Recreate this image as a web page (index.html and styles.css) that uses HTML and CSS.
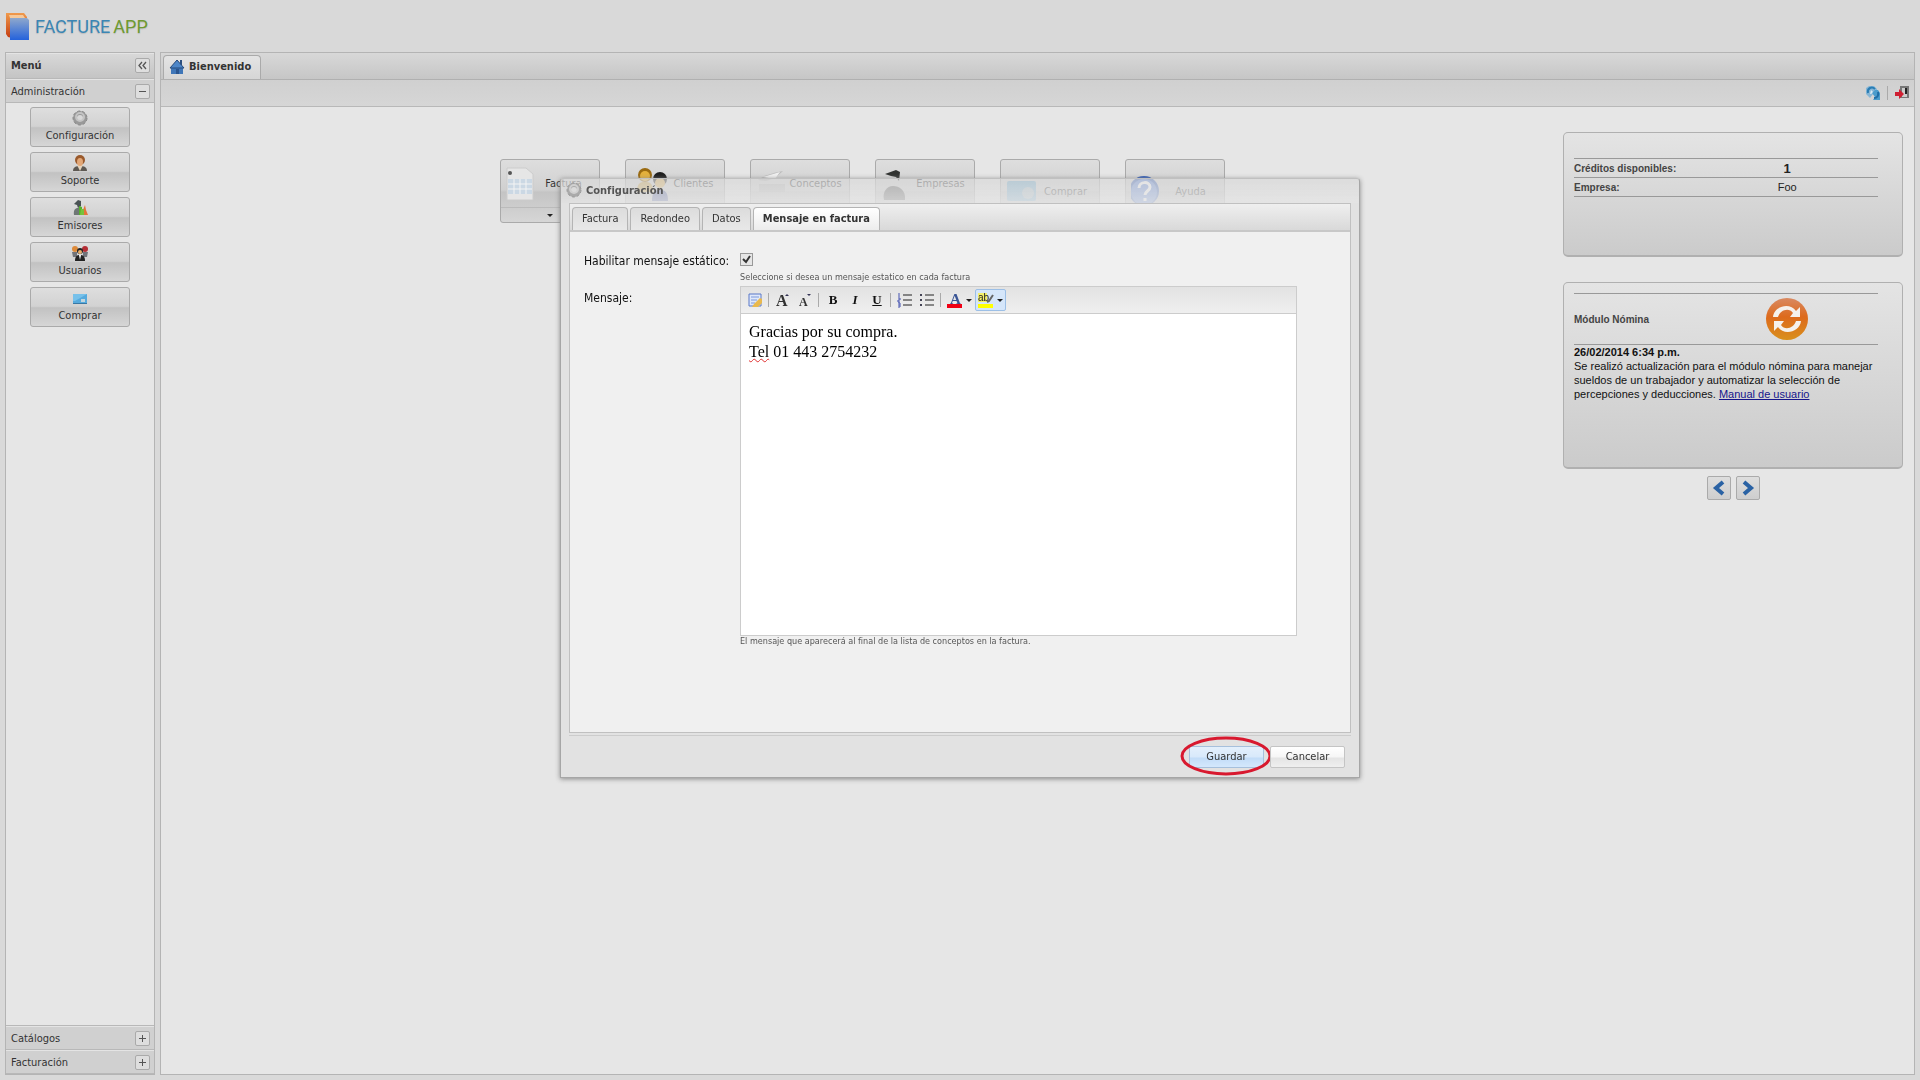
FILE: index.html
```html
<!DOCTYPE html>
<html lang="es">
<head>
  <meta charset="UTF-8">
  <meta name="viewport" content="width=device-width, initial-scale=1.0">
  <title>Facture App</title>
  <link rel="stylesheet" href="styles.css">
</head>
<body>

<header class="logo">
  <svg width="24" height="29" viewBox="0 0 24 29">
    <defs>
      <linearGradient id="blue" x1="0" y1="0" x2="0" y2="1"><stop offset="0" stop-color="#8fa8cc"/><stop offset="1" stop-color="#2462dc"/></linearGradient>
      <linearGradient id="red" x1="0" y1="0" x2="0" y2="1"><stop offset="0" stop-color="#f09a4c"/><stop offset="1" stop-color="#c43c10"/></linearGradient>
    </defs>
    <path d="M0 1h18l3 4v5H6v16l-4-1-2-3z" fill="url(#red)"/>
    <path d="M3 3h14l2 3H4z" fill="#f6c99a"/>
    <path d="M4 6h17l2 2v20H4z" fill="url(#blue)"/>
  </svg>
  <h1 class="logo-text"><span class="logo-blue">FACTURE</span> <span class="logo-green">APP</span></h1>
</header>

<div class="viewport">
  <nav class="menu">
    <div class="menu-title">Menú
      <button class="tool" aria-label="Contraer"><svg width="9" height="9" viewBox="0 0 9 9"><path d="M4 1L1 4.500l3 3.500M8 1L5 4.500l3 3.500" fill="none" stroke="#555" stroke-width="1.300"/></svg></button>
    </div>
    <div class="menu-head">Administración
      <button class="tool" aria-label="Cerrar"><svg width="9" height="9" viewBox="0 0 9 9"><path d="M1 4.500h7" stroke="#555"/></svg></button>
    </div>
    <div class="menu-items">
      <button class="menu-btn">
        <svg width="16" height="16" viewBox="0 0 16 16"><circle cx="8" cy="8" r="5" fill="none" stroke="#999" stroke-width="4"/><circle cx="8" cy="8" r="7" fill="none" stroke="#888" stroke-dasharray="3 2"/><circle cx="8" cy="7" r="4" fill="none" stroke="#c4c4c4" stroke-width="2"/></svg>
        Configuración</button>
      <button class="menu-btn">
        <svg width="16" height="16" viewBox="0 0 16 16"><path d="M1 16c0-4 3-5 7-5s7 1 7 5z" fill="#5d5852"/><path d="M5 10h6l-3 6z" fill="#e5d3bc"/><circle cx="8" cy="5" r="5" fill="#9a5a2c"/><ellipse cx="8" cy="7" rx="3" ry="4" fill="#e3a878"/></svg>
        Soporte</button>
      <button class="menu-btn">
        <svg width="16" height="16" viewBox="0 0 16 16"><path d="M2 15c-1-6 2-7 4-7s5 1 5 7z" fill="#6f7775"/><path d="M2 4l4-4 3 1v5l-3 2-1-3z" fill="#4a5354"/><path d="M7 6l3 1v8H7z" fill="#55b32b"/><path d="M11 10l2-5 1 5 2 5h-5z" fill="#e4743a"/><path d="M9 9h3v6H8z" fill="#77c23c"/></svg>
        Emisores</button>
      <button class="menu-btn">
        <svg width="16" height="16" viewBox="0 0 16 16"><circle cx="3" cy="4" r="3" fill="#dc8a3a"/><circle cx="13" cy="4" r="3" fill="#b42d34"/><path d="M0 7h5v5H1zM11 7h5l-1 5h-4z" fill="#71747a"/><circle cx="8" cy="6" r="3" fill="#222"/><circle cx="8" cy="7" r="2" fill="#e8b070"/><path d="M3 16c0-5 2-6 5-6s5 1 5 6z" fill="#222"/><path d="M7 10h2l-1 5z" fill="#fff"/></svg>
        Usuarios</button>
      <button class="menu-btn">
        <svg width="16" height="16" viewBox="0 0 16 16"><rect x="1" y="4" width="14" height="10" fill="#56aadd"/><path d="M1 4h14L3 11H1z" fill="#77c1ea"/><path d="M9 9h4v3H9z" fill="#c1d5dd"/><path d="M1 13h14v1H1z" fill="#3978a4"/></svg>
        Comprar</button>
    </div>
    <div class="menu-head">Catálogos
      <button class="tool" aria-label="Abrir catálogos"><svg width="9" height="9" viewBox="0 0 9 9"><path d="M1 4.500h7M4.500 1v7" stroke="#555"/></svg></button>
    </div>
    <div class="menu-head">Facturación
      <button class="tool" aria-label="Abrir facturación"><svg width="9" height="9" viewBox="0 0 9 9"><path d="M1 4.500h7M4.500 1v7" stroke="#555"/></svg></button>
    </div>
  </nav>

  <main class="center">
    <div class="tabbar">
      <button class="tab-home">
        <svg width="16" height="16" viewBox="0 0 16 16"><path d="M2 8h12v7H2z" fill="#3f76b8"/><path d="M11 1h2v5h-2z" fill="#2c4f80"/><path d="M8 1l7 8H1z" fill="#4d86c8" stroke="#264a7c"/><path d="M7 10h3v5H7z" fill="#2a5590"/></svg>
        Bienvenido</button>
    </div>
    <div class="toolbar">
      <button class="icon-btn" aria-label="Actualizar"><svg width="16" height="16" viewBox="0 0 16 16"><path d="M1 3l3-2h5l3 3v4l-4 1-3 4-4-4z" fill="#86b6d6"/><path d="M3 8c-1-5 4-7 7-4" fill="none" stroke="#2a7db4" stroke-width="2"/><path d="M6 5l3 3-4 1z" fill="#dcebf4"/><path d="M7 8l3-3h3l2 3v7H8l2-3z" fill="#4b9ccc"/><path d="M13 7c1 4-1 6-4 6" fill="none" stroke="#1f6ea6" stroke-width="2"/></svg></button>
      <span class="sep"></span>
      <button class="icon-btn" aria-label="Salir"><svg width="16" height="16" viewBox="0 0 16 16"><path d="M6 1h9v12H6z" fill="#777"/><path d="M8 3h5v9H8z" fill="#ccc"/><path d="M11 3h2v6h-2z" fill="#222"/><path d="M10 9L5 14v-3H1V7h4V4z" fill="#cf1f32"/></svg></button>
    </div>

    <div class="content">
      <section class="launcher">
        <button class="launch">
          <span class="launch-main"><svg width="28" height="34" viewBox="0 0 28 34"><path d="M1 1h19l7 6v26H1z" fill="#e6e6e6" stroke="#ccc"/><path d="M2 12h24v15H2z" fill="#cbd8e4"/><path d="M2 17h24M2 22h24M8 12v15M14 12v15M20 12v15" stroke="#f4f4f4"/><circle cx="4" cy="6" r="2" fill="#555"/></svg><span class="launch-label">Factura</span></span>
          <span class="launch-arrow"></span>
        </button>
        <button class="launch">
          <span class="launch-main"><svg width="38" height="36" viewBox="0 0 38 36"><circle cx="14" cy="9" r="7" fill="#9a6a10"/><circle cx="14" cy="10" r="5" fill="#e4b13c"/><path d="M6 26c0-9 3-10 8-10s8 1 8 10z" fill="#c8a040"/><circle cx="29" cy="13" r="7" fill="#1d1d1d"/><circle cx="29" cy="17" r="5" fill="#dcae52"/><path d="M21 35c0-9 3-11 8-11s8 2 8 11z" fill="#3b4a90"/></svg><span class="launch-label">Clientes</span></span>
          <span class="launch-arrow"></span>
        </button>
        <button class="launch">
          <span class="launch-main"><svg width="32" height="32" viewBox="0 0 32 32"><path d="M2 12c7-5 15-7 25-9l-8 7-9 3z" fill="#bbb"/><path d="M7 9l17-5-5 7z" fill="#f2f2f2"/><path d="M3 16h26v8H3z" fill="#bbb"/></svg><span class="launch-label">Conceptos</span></span>
          <span class="launch-arrow"></span>
        </button>
        <button class="launch">
          <span class="launch-main"><svg width="32" height="32" viewBox="0 0 32 32"><path d="M4 6l11-4 4 2-1 9-3-4-5-1z" fill="#303230"/><path d="M3 32c-2-8 3-14 9-14s13 4 12 14z" fill="#555"/></svg><span class="launch-label">Empresas</span></span>
          <span class="launch-arrow"></span>
        </button>
        <button class="launch">
          <span class="launch-main"><svg width="32" height="32" viewBox="0 0 32 32"><rect x="1" y="6" width="29" height="20" rx="2" fill="#70aacc"/><circle cx="22" cy="18" r="6" fill="#a6bcc8"/></svg><span class="launch-label">Comprar</span></span>
        </button>
        <button class="launch">
          <span class="launch-main"><svg width="32" height="32" viewBox="0 0 32 32"><circle cx="13" cy="16" r="15" fill="#3760b8"/><circle cx="13" cy="17" r="13" fill="#5c86dc"/><path d="M8 13c0-7 11-7 11-1 0 4-5 4-5 8M14 23v3" fill="none" stroke="#fff" stroke-width="3"/></svg><span class="launch-label">Ayuda</span></span>
        </button>
      </section>

      <aside class="side">
        <div class="card card-info">
          <table class="info">
            <tr><th>Créditos disponibles:</th><td class="credits">1</td></tr>
            <tr><th>Empresa:</th><td>Foo</td></tr>
          </table>
        </div>
        <div class="card card-news">
          <table class="info">
            <tr><th>Módulo Nómina</th><td class="news-icon"><svg width="44" height="44" viewBox="0 0 44 44">
              <defs><linearGradient id="orange" x1="0" y1="0" x2="0" y2="1"><stop offset="0" stop-color="#d98a62"/><stop offset="0.450" stop-color="#dd6a1c"/><stop offset="1" stop-color="#d9901c"/></linearGradient></defs>
              <circle cx="22" cy="22" r="21" fill="url(#orange)"/>
              <path d="M8 20c1-11 17-15 23-6l4-4v10H25l3-4c-4-6-13-3-15 4z" fill="#f5f1ec"/>
              <path d="M36 24c-1 11-17 15-23 6l-4 4V24h10l-3 4c4 6 13 3 15-4z" fill="#f5f1ec"/></svg></td></tr>
          </table>
          <p class="news"><b>26/02/2014 6:34 p.m.</b><br>Se realizó actualización para el módulo nómina para manejar sueldos de un trabajador y automatizar la selección de percepciones y deducciones. <a href="#">Manual de usuario</a></p>
        </div>
        <div class="pager">
          <button class="page-btn" aria-label="Anterior"><svg width="16" height="16" viewBox="0 0 16 16"><path d="M12 2L5 8l7 6" fill="none" stroke="#2a62a4" stroke-width="4"/></svg></button>
          <button class="page-btn" aria-label="Siguiente"><svg width="16" height="16" viewBox="0 0 16 16"><path d="M4 2l7 6-7 6" fill="none" stroke="#2a62a4" stroke-width="4"/></svg></button>
        </div>
      </aside>
    </div>
  </main>
</div>

<div class="window" role="dialog" aria-labelledby="window-title">
  <div class="window-head">
    <svg width="16" height="16" viewBox="0 0 16 16"><circle cx="8" cy="8" r="5" fill="none" stroke="#aaa" stroke-width="4"/><circle cx="8" cy="8" r="7" fill="none" stroke="#999" stroke-dasharray="3 2"/><circle cx="8" cy="7" r="4" fill="none" stroke="#d0d0d0" stroke-width="2"/></svg>
    <span id="window-title">Configuración</span>
  </div>
  <div class="window-body">
    <div class="tabs">
      <button class="tab">Factura</button>
      <button class="tab">Redondeo</button>
      <button class="tab">Datos</button>
      <button class="tab active">Mensaje en factura</button>
    </div>
    <form class="form" id="config">
      <label class="label" for="enable">Habilitar mensaje estático:</label>
      <div class="field">
        <input type="checkbox" class="check" id="enable" checked>
        <div class="help">Seleccione si desea un mensaje estatico en cada factura</div>
      </div>
      <span class="label label-message" id="message-label">Mensaje:</span>
      <div class="field">
        <div class="editor">
          <div class="editor-bar">
            <button type="button" class="edit-btn" aria-label="Estilo"><svg width="16" height="16" viewBox="0 0 16 16"><path d="M2 2h12v12H2z" fill="#dfe8fa" stroke="#5a79c8"/><path d="M4 5h8M4 8h6M4 11h4" stroke="#7c99dc"/><path d="M13 6l2 1v4l-4 4H5l2-3z" fill="#e9b94e"/></svg></button>
            <span class="sep"></span>
            <button type="button" class="edit-btn" aria-label="Agrandar texto"><svg width="18" height="16" viewBox="0 0 18 16"><text class="glyph" x="2" y="14" font-size="16">A</text><path d="M11 4l2-2 2 2z" fill="#335"/></svg></button>
            <button type="button" class="edit-btn" aria-label="Reducir texto"><svg width="18" height="16" viewBox="0 0 18 16"><text class="glyph" x="3" y="14" font-size="12">A</text><path d="M11 2h4l-2 2z" fill="#335"/></svg></button>
            <span class="sep"></span>
            <button type="button" class="edit-btn bold">B</button>
            <button type="button" class="edit-btn italic">I</button>
            <button type="button" class="edit-btn underline">U</button>
            <span class="sep"></span>
            <button type="button" class="edit-btn" aria-label="Lista numerada"><svg width="16" height="16" viewBox="0 0 16 16"><path d="M6 3h9M6 8h9M6 13h9" stroke="#222"/><path d="M2 1v4M1 6h2v2H1v2h2M1 11h2v4H1M1 13h2" fill="none" stroke="#4453b0"/></svg></button>
            <button type="button" class="edit-btn" aria-label="Lista"><svg width="16" height="16" viewBox="0 0 16 16"><path d="M6 3h9M6 8h9M6 13h9" stroke="#222"/><path d="M1 2h2v2H1zM1 7h2v2H1zM1 12h2v2H1z" fill="#445"/></svg></button>
            <span class="sep"></span>
            <button type="button" class="edit-btn split" aria-label="Color de texto"><svg width="16" height="16" viewBox="0 0 16 16"><text class="glyph glyph-blue" x="3" y="12" font-size="15">A</text><path d="M0 12h15v4H0z" fill="#f00014"/></svg><i class="caret"></i></button>
            <button type="button" class="edit-btn split pressed" aria-label="Color de fondo"><svg width="16" height="16" viewBox="0 0 16 16"><path d="M0 1h9v9H0z" fill="#f4f06a"/><text class="glyph-ab" x="0" y="9" font-size="10">ab</text><path d="M15 3l-4 6-2 1" fill="none" stroke="#666" stroke-width="2"/><path d="M0 12h15v4H0z" fill="#ff0"/></svg><i class="caret"></i></button>
          </div>
          <div class="editor-text" contenteditable="true" spellcheck="false" role="textbox" aria-multiline="true" aria-labelledby="message-label">Gracias por su compra.<br><span class="misspelled">Tel</span> 01 443 2754232</div>
        </div>
        <div class="help">El mensaje que aparecerá al final de la lista de conceptos en la factura.</div>
      </div>
    </form>
  </div>
  <div class="window-foot">
    <button class="btn btn-save" form="config">Guardar<svg class="ring" width="92" height="40" viewBox="0 0 92 40"><ellipse cx="46" cy="20" rx="44" ry="18" fill="none" stroke="#d8192f" stroke-width="3"/></svg></button>
    <button class="btn">Cancelar</button>
  </div>
</div>

</body>
</html>
```
FILE: styles.css
```css
* {
  box-sizing: border-box;
}
body {
  margin: 0;
  height: 100vh;
  display: flex;
  flex-direction: column;
  background-color: #d9d9d9;
  color: #333;
  font-family: "DejaVu Sans Condensed", "Liberation Sans", sans-serif;
  font-size: 11px;
}
button {
  font: inherit;
  color: inherit;
  padding: 0;
  margin: 0;
}
svg {
  display: block;
  flex: none;
}
.logo {
  height: 52px;
  padding: 0 6px;
  display: flex;
  align-items: center;
  gap: 5px;
  flex: none;
}
.logo-text {
  margin: 0;
  display: flex;
  gap: 3px;
  font-family: Roboto, sans-serif;
  font-size: 18px;
  font-weight: normal;
  text-shadow: 0 1px 1px #bbb;
}
.logo-blue {
  color: #3b86b4;
}
.logo-green {
  color: #6f9a30;
}
.viewport {
  flex: 1;
  display: flex;
  gap: 5px;
  padding: 0 5px 5px;
  min-height: 0;
}

/* left menu */
.menu {
  width: 150px;
  display: flex;
  flex-direction: column;
  border: 1px solid #b4b4b4;
  background-color: #e6e6e6;
}
.menu-title,
.menu-head {
  height: 24px;
  padding: 0 4px 0 5px;
  display: flex;
  align-items: center;
  justify-content: space-between;
  border-bottom: 1px solid #b8b8b8;
  border-top: 1px solid #e4e4e4;
  background-color: #d0d0d0;
  flex: none;
}
.menu-title {
  height: 26px;
  padding-bottom: 1px;
  font-weight: bold;
  background: linear-gradient(#d8d8d8, #c4c4c4);
}
.tool {
  width: 15px;
  height: 15px;
  display: flex;
  align-items: center;
  justify-content: center;
  border: 1px solid #aaa;
  border-radius: 2px;
  background-color: #dedede;
}
.menu-items {
  flex: 1;
  padding: 4px 0;
  display: flex;
  flex-direction: column;
  align-items: center;
  gap: 5px;
  border-bottom: 1px solid #b8b8b8;
}
.menu-btn {
  width: 100px;
  height: 40px;
  padding-bottom: 2px;
  display: flex;
  flex-direction: column;
  align-items: center;
  justify-content: center;
  gap: 3px;
  border: 1px solid #aaa;
  border-radius: 3px;
  background: linear-gradient(#dedede, #d2d2d2 48%, #c2c2c2 52%, #d6d6d6);
}

/* center panel */
.center {
  flex: 1;
  display: flex;
  flex-direction: column;
  border: 1px solid #b4b4b4;
  background-color: #e6e6e6;
}
.tabbar {
  height: 27px;
  padding: 2px 2px 0;
  display: flex;
  border-bottom: 1px solid #b0b0b0;
  background: linear-gradient(#d8d8d8, #c6c6c6);
}
.tab-home {
  padding: 0 9px 2px 5px;
  display: flex;
  align-items: center;
  gap: 4px;
  border: 1px solid #aaa;
  border-bottom: 0;
  border-radius: 4px 4px 0 0;
  background: linear-gradient(#e4e4e4, #d6d6d6);
  font-weight: bold;
}
.toolbar {
  height: 27px;
  padding: 0 4px;
  display: flex;
  align-items: center;
  justify-content: flex-end;
  gap: 5px;
  border-bottom: 1px solid #b8b8b8;
  background: linear-gradient(#d0d0d0, #d6d6d6);
}
.icon-btn {
  border: 0;
  background: none;
}
.sep {
  width: 1px;
  height: 14px;
  margin: 0 1px;
  background-color: #aaa;
}
.content {
  flex: 1;
  display: flex;
  padding: 25px 11px 0 0;
}
.launcher {
  flex: 1;
  padding-top: 27px;
  display: flex;
  justify-content: center;
  align-items: flex-start;
  gap: 25px;
}
.launch {
  width: 100px;
  height: 64px;
  display: flex;
  flex-direction: column;
  border: 1px solid #aaa;
  border-radius: 3px;
  background: linear-gradient(#dedede, #d0d0d0 48%, #c4c4c4 52%, #d6d6d6);
}
.launch-main {
  flex: 1;
  width: 100%;
  padding: 0 5px;
  display: flex;
  align-items: center;
}
.launch-label {
  flex: 1;
}
.launch-arrow {
  width: 100%;
  height: 15px;
  display: flex;
  align-items: center;
  justify-content: center;
  border-top: 1px solid #bbb;
}
.launch-arrow::after,
.caret {
  content: "";
  border: 3px solid transparent;
  border-top-color: #222;
  border-bottom: 0;
}

/* right column */
.side {
  width: 340px;
  display: flex;
  flex-direction: column;
  font-family: "Liberation Sans", sans-serif;
}
.card {
  padding: 10px 24px 0 10px;
  border: 1px solid #b0b0b0;
  border-bottom-width: 2px;
  border-radius: 5px;
  background: linear-gradient(#e4e4e4, #cbcbcb);
}
.card-info {
  height: 125px;
  padding-top: 25px;
}
.card-news {
  height: 187px;
  margin-top: 25px;
}
.info {
  width: 100%;
  border-collapse: collapse;
}
.info th,
.info td {
  height: 19px;
  padding: 0;
  border-top: 1px solid #999;
  border-bottom: 1px solid #999;
}
.info th {
  width: 60%;
  text-align: left;
  font-size: 10px;
  color: #444;
}
.info td {
  width: 40%;
  padding-right: 60px;
  text-align: center;
  color: #222;
}
.info .credits {
  font-size: 13px;
  font-weight: bold;
}
.info .news-icon {
  height: 51px;
}
.news-icon svg {
  margin: 0 auto;
}
.news {
  margin: 0;
  line-height: 14px;
  color: #111;
}
.news a {
  color: #15158c;
}
.pager {
  padding-top: 7px;
  display: flex;
  justify-content: center;
  gap: 5px;
}
.page-btn {
  width: 24px;
  height: 24px;
  display: flex;
  align-items: center;
  justify-content: center;
  border: 1px solid #aaa;
  border-radius: 2px;
  background: linear-gradient(#dedede, #cecece);
}

/* dialog over the page */
.window {
  position: fixed;
  top: 178px;
  left: calc(50% - 400px);
  width: 800px;
  height: 600px;
  padding: 0 8px 0;
  display: flex;
  flex-direction: column;
  border: 1px solid #a6a6a6;
  border-top-color: #c0c0c0;
  border-radius: 3px 3px 0 0;
  background: linear-gradient(rgba(216, 216, 216, 0.7), rgba(228, 228, 228, 0.85) 24px, #e2e2e2 24px);
  box-shadow: 0 1px 5px #888;
}
.window-head {
  height: 24px;
  padding-bottom: 2px;
  display: flex;
  align-items: center;
  gap: 4px;
  margin-left: -3px;
  font-weight: bold;
  color: #555;
  flex: none;
}
.window-body {
  flex: 1;
  display: flex;
  flex-direction: column;
  border: 1px solid #c0c0c0;
  background-color: #f0f0f0;
}
.tabs {
  height: 28px;
  padding: 3px 2px 0;
  display: flex;
  gap: 2px;
  border-bottom: 2px solid #c8c8c8;
  background: linear-gradient(#efefef, #d9d9d9);
}
.tab {
  padding: 0 9px 1px;
  border: 1px solid #b4b4b4;
  border-bottom: 0;
  border-radius: 4px 4px 0 0;
  background: linear-gradient(#dcdcdc, #e8e8e8);
}
.tab.active {
  background: linear-gradient(#fff, #ececec);
  font-weight: bold;
}
.form {
  padding: 20px 53px 0 14px;
  display: grid;
  grid-template-columns: 156px 1fr;
  align-content: start;
  color: #111;
}
.label {
  font-size: 12px;
  line-height: 18px;
}
.label-message {
  padding-top: 3px;
}
.check {
  display: block;
  appearance: none;
  width: 13px;
  height: 13px;
  margin: 1px 0 6px;
  border: 1px solid #999;
  background-color: #e6e6e6;
}
.check:checked {
  background-image: url("data:image/svg+xml,%3Csvg xmlns='http://www.w3.org/2000/svg' viewBox='0 0 11 11'%3E%3Cpath d='M2 5l3 3 4-6' fill='none' stroke='%23333' stroke-width='2'/%3E%3C/svg%3E");
}
.help {
  font-size: 9px;
  line-height: 10px;
  color: #555;
}
.check + .help {
  margin-bottom: 4px;
}
.editor {
  border: 1px solid #ccc;
  background-color: #fff;
}
.editor-bar {
  height: 27px;
  padding: 0 3px;
  display: flex;
  align-items: center;
  border-bottom: 1px solid #ccc;
  background: linear-gradient(#e2e2e2, #efefef);
}
.editor-bar .sep {
  margin: 0 3px 0 2px;
}
.edit-btn {
  width: 22px;
  height: 22px;
  display: flex;
  align-items: center;
  justify-content: center;
  border: 1px solid transparent;
  background: none;
  font-family: "Liberation Serif", serif;
  font-size: 13px;
}
.edit-btn.split {
  width: 31px;
  gap: 3px;
  border-radius: 2px;
}
.edit-btn.pressed {
  border-color: #9cbfe6;
  background-color: #d5e6fa;
}
.bold {
  font-weight: bold;
}
.italic {
  font-style: italic;
  font-weight: bold;
}
.underline {
  font-weight: bold;
  text-decoration: underline;
}
.glyph {
  font-family: "Liberation Serif", serif;
  font-weight: bold;
  fill: #333;
}
.glyph-blue {
  fill: #3a5595;
}
.glyph-ab {
  font-family: "Liberation Sans", sans-serif;
  fill: #222;
}
.editor-text {
  height: 321px;
  padding: 8px;
  font-family: "Liberation Serif", serif;
  font-size: 16px;
  line-height: 20px;
  color: #000;
  outline: none;
}
.misspelled {
  text-decoration: underline wavy #e03030 1px;
}
.window-foot {
  height: 42px;
  padding: 0 6px 0;
  display: flex;
  align-items: center;
  justify-content: flex-end;
  gap: 6px;
  border-top: 1px solid #ccc;
  margin-top: 2px;
  flex: none;
}
.btn {
  position: relative;
  width: 75px;
  height: 22px;
  border: 1px solid #c4c4c4;
  border-radius: 2px;
  background: linear-gradient(#fff, #f6f6f6 50%, #e4e4e4 55%, #efefef);
}
.btn-save {
  border-color: #a6c0dc;
  background: linear-gradient(#e4f0fc, #d8e9fb 50%, #c2dcf8 55%, #d4e8fc);
}
/* red ring round the save button */
.ring {
  position: absolute;
  top: -11px;
  left: -10px;
}
```
